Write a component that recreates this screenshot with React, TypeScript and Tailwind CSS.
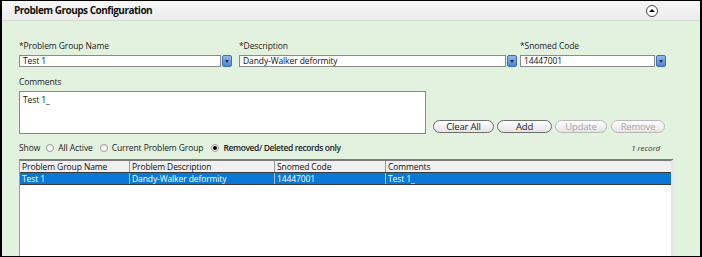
import React from "react";

const font = { fontFamily: '"Open Sans", "Noto Sans", Arial, sans-serif' };

function DropButton() {
  return (
    <div className="ml-[1px] flex h-[12px] w-[10px] items-center justify-center rounded-[2px] border border-[#3b6fb0] bg-gradient-to-b from-[#8fb9ec] to-[#4b86d6]">
      <div className="h-0 w-0 border-x-[2.5px] border-t-[3px] border-x-transparent border-t-[#1b2b44]" />
    </div>
  );
}

function Field({ label, value, width }: { label: string; value: string; width: string }) {
  return (
    <div className="flex flex-col">
      <label className="h-[15px] text-[8.5px] leading-[12px] tracking-[-0.1px] text-[#222]">{label}</label>
      <div className="flex items-center">
        <div className={`${width} h-[12px] border border-[#8a8a8a] bg-white pl-[3px] text-[8.5px] leading-[10px] tracking-[-0.1px] text-[#111]`}>
          {value}
        </div>
        <DropButton />
      </div>
    </div>
  );
}

function PillButton({ label, width, gap, disabled }: { label: string; width: string; gap: string; disabled?: boolean }) {
  return (
    <button
      className={`${width} ${gap} h-[13px] rounded-full border bg-gradient-to-b from-white to-[#e4e4e4] text-[9.5px] leading-[10px] tracking-[-0.2px] ${
        disabled ? "border-[#b8b8b8] text-[#a8a8a8]" : "border-[#6e6e6e] text-[#222]"
      }`}
    >
      {label}
    </button>
  );
}

function Radio({ checked }: { checked?: boolean }) {
  return (
    <span className="flex h-[8px] w-[8px] items-center justify-center rounded-full border border-[#9a9a9a] bg-gradient-to-b from-[#f2f2f2] to-white">
      {checked && <span className="h-[4px] w-[4px] rounded-full bg-black" />}
    </span>
  );
}

export default function App() {
  return (
    <div className="flex h-[257px] w-[702px] flex-col border-y border-l-2 border-r-2 border-black bg-[#e2f2df] text-[#222]" style={font}>
      <div className="flex h-[20px] items-center justify-between border-b border-[#d6dcd4] bg-gradient-to-b from-[#f6f6f6] to-[#ececec] pl-[12px] pr-[42px]">
        <span className="text-[10px] font-bold tracking-[-0.5px] text-[#111]">Problem Groups Configuration</span>
        <span className="flex h-[12px] w-[12px] items-center justify-center rounded-full border border-[#444] bg-white">
          <span className="h-0 w-0 border-x-[3px] border-b-[3px] border-x-transparent border-b-black" />
        </span>
      </div>

      <div className="flex flex-1 flex-col pl-[17px] pt-[19px]">
        <div className="flex">
          <Field label="*Problem Group Name" value="Test 1" width="w-[202px]" />
          <div className="w-[7px]" />
          <Field label="*Description" value="Dandy-Walker deformity" width="w-[267px]" />
          <div className="w-[3px]" />
          <Field label="*Snomed Code" value="14447001" width="w-[135px]" />
        </div>

        <label className="mt-[9px] h-[15px] text-[8.5px] leading-[12px] tracking-[-0.1px]">Comments</label>
        <div className="flex items-end">
          <div className="h-[43px] w-[407px] border border-[#8a8a8a] bg-white pl-[3px] pt-[2px] text-[8.5px] leading-[11px] tracking-[-0.1px] text-[#111]">
            Test 1_
          </div>
          <div className="mb-[1px] flex">
            <PillButton label="Clear All" width="w-[61px]" gap="ml-[7px]" />
            <PillButton label="Add" width="w-[55px]" gap="ml-[3px]" />
            <PillButton label="Update" width="w-[52px]" gap="ml-[3px]" disabled />
            <PillButton label="Remove" width="w-[54px]" gap="ml-[4px]" disabled />
          </div>
        </div>

        <div className="mt-[8px] flex h-[12px] w-[641px] items-center text-[8.5px] tracking-[-0.1px]">
          <span className="mr-[6px]">Show</span>
          <Radio />
          <span className="ml-[4px] mr-[7px]">All Active</span>
          <Radio />
          <span className="ml-[4px] mr-[8px]">Current Problem Group</span>
          <Radio checked />
          <span className="ml-[4px] font-semibold tracking-[-0.4px]">Removed/ Deleted records only</span>
          <span className="ml-auto text-[8px] italic text-[#333]">1 record</span>
        </div>

        <div className="mt-[5px] flex w-[655px] flex-1 flex-col border-l border-r-[3px] border-t-2 border-[#a0a0a0] border-r-[#e6e6e6] border-t-[#7a7a7a] bg-white text-[8.5px] leading-[11px] tracking-[-0.1px]">
          <div className="flex h-[11px] bg-[#f0f0f0] text-[#111]">
            <div className="w-[110px] border-r border-[#9a9a9a] pl-[2px]">Problem Group Name</div>
            <div className="w-[145px] border-r border-[#9a9a9a] pl-[2px]">Problem Description</div>
            <div className="w-[111px] border-r border-[#9a9a9a] pl-[2px]">Snomed Code</div>
            <div className="flex-1 pl-[2px]">Comments</div>
          </div>
          <div className="flex h-[13px] border-y border-[#3a3a3a] bg-[#0a78d6] text-white">
            <div className="w-[110px] border-r border-[#9bc4ea] pl-[2px]">Test 1</div>
            <div className="w-[145px] border-r border-[#9bc4ea] pl-[2px]">Dandy-Walker deformity</div>
            <div className="w-[111px] border-r border-[#9bc4ea] pl-[2px]">14447001</div>
            <div className="flex-1 pl-[2px]">Test 1_</div>
          </div>
        </div>
      </div>
    </div>
  );
}
